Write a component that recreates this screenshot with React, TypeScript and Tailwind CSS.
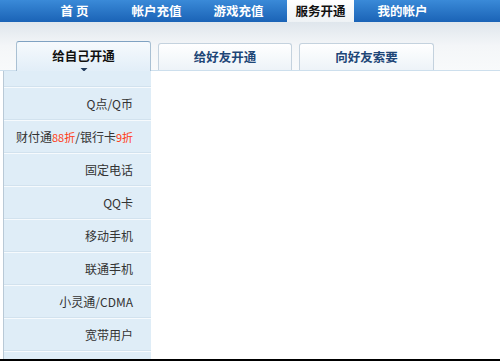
import React from "react";

const font = { fontFamily: '"Noto Sans CJK SC", "Liberation Sans", sans-serif' };

const navItems = ["首 页", "帐户充值", "游戏充值", "服务开通", "我的帐户"];

function SideItem({ children }: { children: React.ReactNode }) {
  return (
    <div className="h-[33px] flex items-center justify-end pr-[18px] border-b border-b-[#f6fafd] shadow-[inset_0_-1px_0_#d2e2ee] text-[12px] text-[#333] leading-none">
      {children}
    </div>
  );
}

export default function App() {
  return (
    <div className="w-[500px] h-[361px] bg-white relative overflow-hidden flex flex-col" style={font}>
      {/* top nav */}
      <div className="h-[22px] flex items-stretch gap-[15px] pl-[41px] bg-gradient-to-b from-[#3a8ad8] to-[#1a63b6] shrink-0">
        {navItems.map((n) =>
          n === "服务开通" ? (
            <div key={n} className="w-[67px] flex items-center justify-center bg-gradient-to-b from-white to-[#eef2f5] text-[#111] font-bold text-[12.5px] leading-none">
              {n}
            </div>
          ) : (
            <div key={n} className="w-[67px] flex items-center justify-center text-white font-bold text-[12.5px] leading-none">
              {n}
            </div>
          )
        )}
      </div>
      {/* tabs area */}
      <div className="h-[49px] shrink-0 bg-gradient-to-b from-[#dfe6ec] via-[#f4f6f8] to-[#f8fafb] bg-[length:100%_100%] flex items-end pl-[16px] gap-[7px] border-b border-b-[#cddfed] relative">
        <div className="w-[135px] h-[30px] -mb-px border border-[#a9c0d3] border-t-[#7fa2c2] border-b-0 rounded-t-[3px] bg-gradient-to-b from-[#f6fafd] to-[#e2eef8] flex flex-col items-center pt-[8px] relative">
          <span className="text-[12.5px] font-bold text-[#111] leading-none">给自己开通</span>
          <svg width="8" height="4" viewBox="0 0 8 4" className="mt-[5px]">
            <polygon points="0,0 8,0 4,4" fill="#1f3a5c" />
          </svg>
        </div>
        <div className="w-[134px] h-[27px] border border-[#c4d2de] border-b-0 rounded-t-[3px] bg-gradient-to-b from-white to-[#edf3f8] flex items-center justify-center">
          <span className="text-[12.5px] font-bold text-[#1e4677] leading-none">给好友开通</span>
        </div>
        <div className="w-[135px] h-[27px] border border-[#c4d2de] border-b-0 rounded-t-[3px] bg-gradient-to-b from-white to-[#edf3f8] flex items-center justify-center">
          <span className="text-[12.5px] font-bold text-[#1e4677] leading-none">向好友索要</span>
        </div>
      </div>
      {/* content */}
      <div className="flex-1 flex">
        <div className="ml-[3px] w-[148px] border-l border-l-[#b9c9d6] bg-[#dfedf7] flex flex-col">
          <div className="h-[17px] border-b border-b-[#f6fafd] shadow-[inset_0_-1px_0_#d2e2ee]" />
          <SideItem>Q点/Q币</SideItem>
          <SideItem>
            财付通<span className="text-[#ff3c14] text-[11px]">88折</span>/银行卡<span className="text-[#ff3c14] text-[11px]">9折</span>
          </SideItem>
          <SideItem>固定电话</SideItem>
          <SideItem>QQ卡</SideItem>
          <SideItem>移动手机</SideItem>
          <SideItem>联通手机</SideItem>
          <SideItem>小灵通/CDMA</SideItem>
          <SideItem>宽带用户</SideItem>
        </div>
        <div className="flex-1 bg-white" />
      </div>
      <div className="absolute left-0 right-0 bottom-0 h-[2px] bg-black" />
    </div>
  );
}
